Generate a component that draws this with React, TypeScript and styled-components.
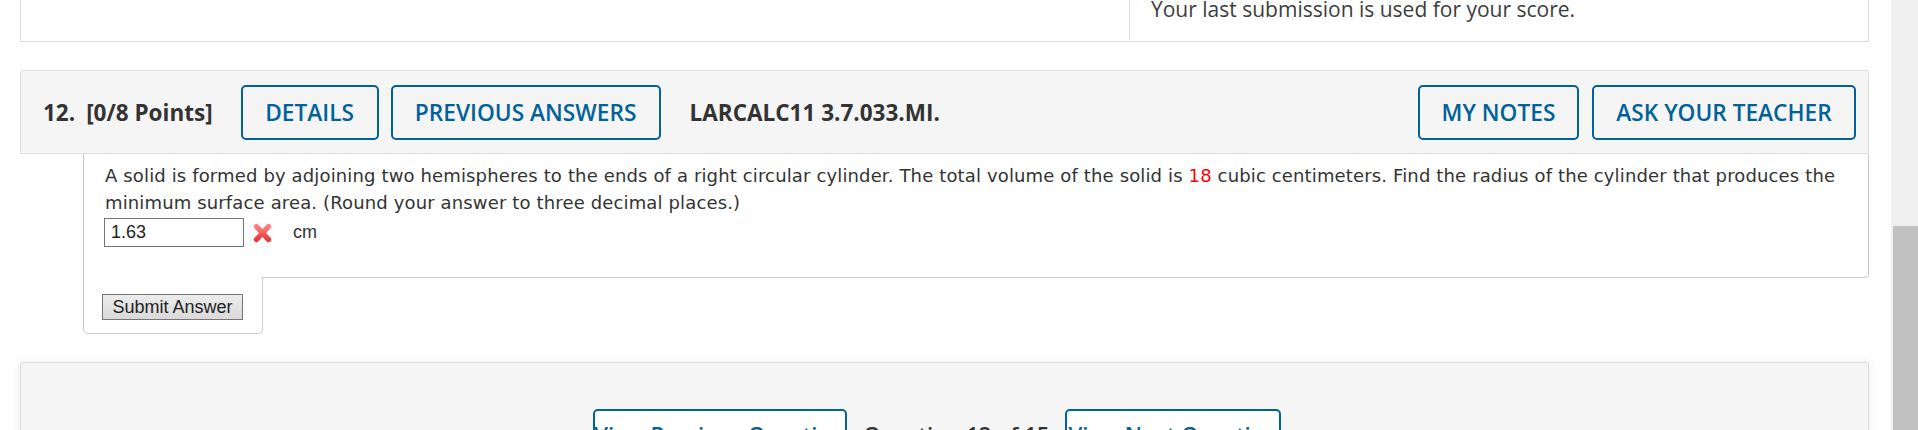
import React from "react";
import styled, { createGlobalStyle } from "styled-components";

const Global = createGlobalStyle`
  html, body { margin: 0; padding: 0; background: #fff; overflow: hidden; }
  * { box-sizing: border-box; }
`;

const BLUE = "#006298";

const Page = styled.div`
  display: flex;
  align-items: flex-start;
  width: 1918px;
  height: 430px;
  overflow: hidden;
`;

const Main = styled.div`
  flex: 1;
  min-width: 0;
  padding: 0 22px 0 20px;
`;

const ScrollTrack = styled.div`
  flex: 0 0 27px;
  height: 430px;
  background: #f0f0f0;
  padding: 226px 0 0 2px;
  display: flex;
`;

const ScrollThumb = styled.div`
  flex: 1;
  background: #c1c1c1;
`;

const PrevPanel = styled.div`
  display: grid;
  grid-template-columns: 1108px 1fr;
  height: 42px;
  border: 1px solid #dcdcdc;
  border-top: none;
  background: #fff;
`;

const PrevCell = styled.div<{ $divider?: boolean }>`
  border-left: ${(p) => (p.$divider ? "1px solid #dcdcdc" : "none")};
  margin-bottom: 1px;
  padding: 0 0 0 21px;
  font-family: "Open Sans", sans-serif;
  font-size: 21px;
  color: #3d3d3d;
  line-height: 28px;
  overflow: hidden;
`;

const PrevText = styled.div`
  margin-top: -5px;
`;

const QHeader = styled.div`
  margin-top: 28px;
  height: 84px;
  border: 1px solid #dddddd;
  border-radius: 3px 3px 0 0;
  background: #f5f5f5;
  display: flex;
  align-items: center;
  padding: 0 12px 0 22px;
  font-family: "Open Sans", sans-serif;
  color: #333;
`;

const HeadText = styled.span<{ $ml?: number; $mr?: number }>`
  font-size: 22.5px;
  font-weight: 700;
  margin-left: ${(p) => p.$ml ?? 0}px;
  margin-right: ${(p) => p.$mr ?? 0}px;
`;

const OutlineButton = styled.button<{ $w: number }>`
  height: 55px;
  width: ${(p) => p.$w}px;
  border: 2px solid ${BLUE};
  border-radius: 5px;
  background: transparent;
  color: ${BLUE};
  font-family: "Open Sans", sans-serif;
  font-weight: 600;
  font-size: 22.7px;
  padding: 0;
  text-transform: uppercase;
  display: flex;
  align-items: center;
  justify-content: center;
  cursor: pointer;
`;

const ButtonGroup = styled.div<{ $gap: number }>`
  display: flex;
  gap: ${(p) => p.$gap}px;
`;

const Spacer = styled.div`
  flex: 1;
`;

const QBody = styled.div`
  margin-left: 63px;
  border: 1px solid #cccccc;
  border-top: none;
  border-radius: 0 0 4px 0;
  background: #fff;
  padding: 8px 20px 30px 21px;
`;

const Prompt = styled.div`
  font-family: Verdana, "DejaVu Sans", sans-serif;
  font-size: 18px;
  letter-spacing: 0.14px;
  line-height: 27px;
  color: #333;
`;

const Given = styled.span`
  color: #ff0000;
`;

const AnswerRow = styled.div`
  margin-top: 2px;
  display: flex;
  align-items: center;
  height: 29px;
`;

const AnswerInput = styled.input`
  width: 140px;
  height: 29px;
  border: 1px solid #767676;
  padding: 0 6px;
  font-family: "Liberation Sans", Arial, sans-serif;
  font-size: 18px;
  color: #222;
  margin: 0 9px 0 -1px;
`;

const Unit = styled.span`
  font-family: "Liberation Sans", Arial, sans-serif;
  font-size: 18px;
  color: #333;
  margin-left: 21px;
`;

const SubmitTab = styled.div`
  margin-left: 63px;
  margin-top: -1px;
  width: 180px;
  background: #fff;
  border: 1px solid #cccccc;
  border-top: none;
  border-radius: 0 0 5px 5px;
  padding: 17px 0 13px 18px;
`;

const SubmitButton = styled.button`
  display: block;
  height: 26px;
  width: 141px;
  padding: 0;
  border: 1px solid #767676;
  background: linear-gradient(#ececec, #dadada);
  font-family: "Liberation Sans", Arial, sans-serif;
  font-size: 18px;
  color: #222;
  line-height: 22px;
`;

const NavPanel = styled.div`
  margin-top: 28px;
  height: 120px;
  border: 1px solid #dddddd;
  border-radius: 3px;
  background: #f5f5f5;
  box-shadow: 0 0 9px rgba(0, 0, 0, 0.09);
  display: flex;
  justify-content: center;
  align-items: flex-start;
  padding: 46px 15px 0 0;
  font-family: "Open Sans", sans-serif;
`;

const NavButton = styled.button<{ $w: number }>`
  width: ${(p) => p.$w}px;
  height: 52px;
  border: 2px solid ${BLUE};
  border-radius: 5px;
  background: #fff;
  color: ${BLUE};
  font-family: "Open Sans", sans-serif;
  font-size: 22px;
  font-weight: 600;
  padding: 8px 0 0;
  display: flex;
  justify-content: center;
  align-items: flex-start;
  line-height: 30px;
  white-space: nowrap;
`;

const NavLabel = styled.span`
  font-size: 22px;
  font-weight: 600;
  color: #333;
  padding-top: 10px;
  line-height: 30px;
  margin: 0 16px 0 17px;
  white-space: nowrap;
`;

const WrongMark = () => (
  <svg width="19" height="20" viewBox="0 0 19 20" aria-label="incorrect">
    <defs>
      <linearGradient id="xg" x1="0" y1="0" x2="0" y2="1">
        <stop offset="0" stopColor="#ff8080" />
        <stop offset="1" stopColor="#e23b3b" />
      </linearGradient>
    </defs>
    <path d="M3.5 3.5 L15.5 16.5 M15.5 3.5 L3.5 16.5" stroke="url(#xg)" strokeWidth="5.4" strokeLinecap="round" fill="none" />
  </svg>
);

export default function App() {
  return (
    <>
      <Global />
      <Page>
        <Main>
          <PrevPanel>
            <PrevCell />
            <PrevCell $divider>
              <PrevText>Your last submission is used for your score.</PrevText>
            </PrevCell>
          </PrevPanel>

          <QHeader>
            <HeadText $mr={11}>12.</HeadText>
            <HeadText $mr={28}>[0/8 Points]</HeadText>
            <ButtonGroup $gap={12}>
              <OutlineButton $w={138}>Details</OutlineButton>
              <OutlineButton $w={270}>Previous Answers</OutlineButton>
            </ButtonGroup>
            <HeadText $ml={29}>LARCALC11 3.7.033.MI.</HeadText>
            <Spacer />
            <ButtonGroup $gap={13}>
              <OutlineButton $w={161}>My Notes</OutlineButton>
              <OutlineButton $w={264}>Ask Your Teacher</OutlineButton>
            </ButtonGroup>
          </QHeader>

          <QBody>
            <Prompt>
              A solid is formed by adjoining two hemispheres to the ends of a right circular cylinder. The total volume of
              the solid is <Given>18</Given> cubic centimeters. Find the radius of the cylinder that produces the minimum
              surface area. (Round your answer to three decimal places.)
            </Prompt>
            <AnswerRow>
              <AnswerInput defaultValue="1.63" />
              <WrongMark />
              <Unit>cm</Unit>
            </AnswerRow>
          </QBody>
          <SubmitTab>
            <SubmitButton>Submit Answer</SubmitButton>
          </SubmitTab>

          <NavPanel>
            <NavButton $w={254}>View Previous Question</NavButton>
            <NavLabel>Question 12 of 15</NavLabel>
            <NavButton $w={216}>View Next Question</NavButton>
          </NavPanel>
        </Main>
        <ScrollTrack>
          <ScrollThumb />
        </ScrollTrack>
      </Page>
    </>
  );
}
